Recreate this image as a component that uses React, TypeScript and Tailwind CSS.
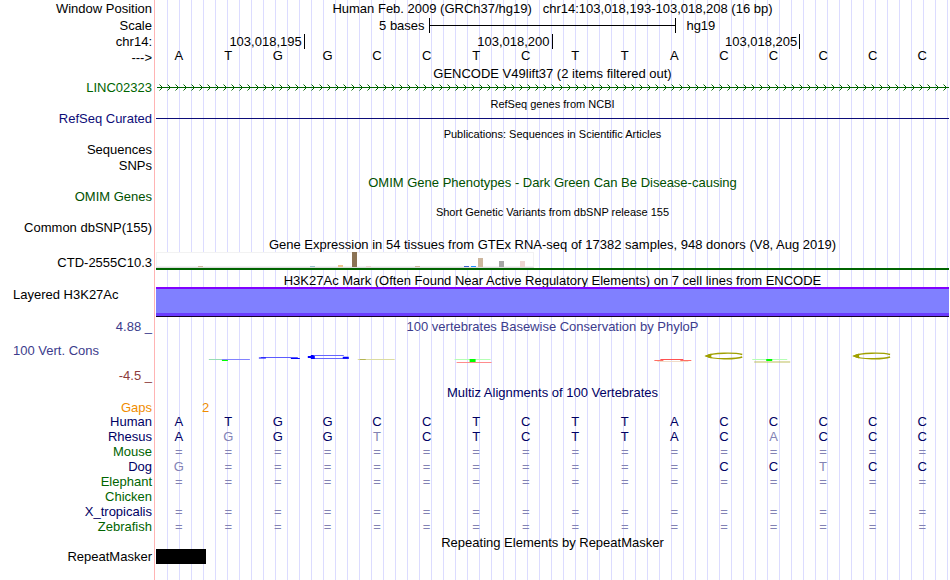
import type { ReactNode } from 'react'
import clsx from 'clsx'

const SEQUENCE = 'ATGGCCTCTTACCCCC'

const TISSUE_BARS = [
  { index: 6, height: 1, color: '#cdb79e' },
  { index: 22, height: 1, color: '#9ac0cd' },
  { index: 26, height: 2, color: '#eec591' },
  { index: 28, height: 15, color: '#8b7355' },
  { index: 30, height: 1, color: '#eed5d2' },
  { index: 37, height: 1, color: '#cdb79e' },
  { index: 44, height: 1, color: '#3a5fcd' },
  { index: 45, height: 1, color: '#1e90ff' },
  { index: 46, height: 9, color: '#cdb79e' },
  { index: 49, height: 6, color: '#a6a6a6' },
  { index: 52, height: 6, color: '#eed5d2' },
]

// '=' marks bases with no alignment, a space is an empty cell
const SPECIES = [
  { name: 'Human', color: 'text-[#000064]', bases: 'ATGGCCTCTTACCCCC' },
  { name: 'Rhesus', color: 'text-[#000064]', bases: 'AGGGTCTCTTACACCC' },
  { name: 'Mouse', color: 'text-[#006400]', bases: '================' },
  { name: 'Dog', color: 'text-[#000064]', bases: 'G==========CCTCC' },
  { name: 'Elephant', color: 'text-[#006400]', bases: '================' },
  { name: 'Chicken', color: 'text-[#006400]', bases: '                ' },
  { name: 'X_tropicalis', color: 'text-[#000064]', bases: '================' },
  { name: 'Zebrafish', color: 'text-[#006400]', bases: '================' },
]

interface RowProps {
  label?: ReactNode
  className?: string
  labelClass?: string
  trackClass?: string
  children?: ReactNode
}

function Row({ label, className = 'h-[15px]', labelClass = 'items-center justify-end', trackClass = '', children }: RowProps) {
  return (
    <div className={clsx('flex', className)}>
      <div className={clsx('mr-px flex w-[155px] shrink-0 border-r border-[#ffb4b4] pr-0.5', labelClass)}>{label}</div>
      <div
        className={clsx(
          'min-w-0 flex-1 bg-[repeating-linear-gradient(to_right,transparent_0px,transparent_11px,#dcdcff_11px,#dcdcff_12px)]',
          trackClass
        )}
      >
        {children}
      </div>
    </div>
  )
}

interface TitleRowProps {
  title: string
  label?: ReactNode
  className?: string
  titleClass?: string
}

function TitleRow({ title, label, className = 'h-4', titleClass = '' }: TitleRowProps) {
  return (
    <Row label={label} className={className} labelClass="items-center justify-end text-[#3c3c8c]" trackClass="flex items-center justify-center">
      <h2 className={titleClass}>{title}</h2>
    </Row>
  )
}

function Bases({ bases, reference, className = '' }: { bases: string; reference?: string; className?: string }) {
  return (
    <div className={clsx('grid h-full grid-cols-16 items-center text-center', className)}>
      {bases.split('').map((base, i) => (
        <span key={i} className={clsx('pr-1', reference && base !== reference[i] && 'text-[#8282b4]')}>
          {base}
        </span>
      ))}
    </div>
  )
}

function GeneArrows() {
  return (
    <svg className="block h-full w-full" aria-hidden="true">
      <defs>
        <pattern id="arrows" width="8" height="14" patternUnits="userSpaceOnUse">
          <path d="M3.5 3.5 6.5 6.5 3.5 9.5" fill="none" stroke="#006400" strokeWidth="1" />
        </pattern>
      </defs>
      <rect width="100%" height="14" fill="url(#arrows)" />
      <rect x="1" y="6" width="100%" height="1" fill="#006400" />
    </svg>
  )
}

function TissueChart() {
  return (
    <svg className="block" width="378" height="16" shapeRendering="crispEdges" role="img" aria-label="Expression by tissue">
      <rect width="378" height="16" fill="#f2f2f2" />
      <rect x="1" y="1" width="376" height="13" fill="#fff" />
      <rect y="15" width="378" height="1" fill="#dcdcdc" />
      {TISSUE_BARS.map((bar) => (
        <rect key={bar.index} x={bar.index * 7} y={15 - bar.height} width="5" height={bar.height} fill={bar.color} />
      ))}
    </svg>
  )
}

function ConservationLogo() {
  return (
    <svg className="block h-[50px] w-full" viewBox="0 0 794 50" preserveAspectRatio="none" fill="none" role="img" aria-label="Conservation logo">
      {/* T / G */}
      <path d="M53 24.5H94" stroke="#8282ff" />
      <path d="M53 24.5H66" stroke="#96dcb4" />
      <path d="M66 25.5H72" stroke="#00ff00" />
      {/* G */}
      <path d="M105 22.5H142" stroke="#5a5aff" />
      <path d="M103 23h7M135 23.5h9" stroke="#0000ff" />
      {/* G */}
      <path d="M158 20.5H188M158 23.5H193" stroke="#6464ff" />
      <path d="M152 22h7M187 22.8h6M155 21h3M155 23h4" stroke="#0000ff" strokeWidth="2" />
      {/* C */}
      <path d="M202 24.5H239" stroke="#dcdca0" />
      <path d="M204 24.5h6" stroke="#b4b450" />
      {/* T over A */}
      <path d="M299 24.5H335" stroke="#b4ffb4" />
      <path d="M301 27.5H336" stroke="#ff8c8c" />
      <rect x="314" y="24" width="6" height="3" fill="#00ff00" />
      {/* A */}
      <path d="M505 24.5H528" stroke="#ff5050" />
      <path d="M499 25.5H508M525 25.5H536" stroke="#ff6e64" />
      <path d="M502 26.5H533" stroke="#f0dcc8" />
      {/* C */}
      <path d="M587 19.5C580 17.5 557 17.5 551 21C557 24.5 580 24.5 587 22" stroke="#a0a000" strokeWidth="1.4" />
      <path d="M549 21 556 18.5V23.5Z" fill="#a0a000" />
      {/* T over C */}
      <path d="M597 24.5H632" stroke="#b4ffb4" />
      <path d="M599 27H635" stroke="#bebe5a" />
      <rect x="611" y="24" width="6" height="2" fill="#00ff00" />
      {/* C */}
      <path d="M735 19.5C728 17.5 705 17.5 699 21C705 24.5 728 24.5 735 22" stroke="#a0a000" strokeWidth="1.4" />
      <path d="M697 21 704 18.5V23.5Z" fill="#a0a000" />
    </svg>
  )
}

export default function App() {
  return (
    <main className="flex min-h-screen flex-col overflow-hidden bg-white pr-px font-['Liberation_Sans',Arial,sans-serif] text-[13px] leading-[15px] whitespace-pre text-black">
      <Row label="Window Position" className="h-[17px]" trackClass="flex items-center justify-center">
        <h1>Human Feb. 2009 (GRCh37/hg19)   chr14:103,018,193-103,018,208 (16 bp)</h1>
      </Row>
      <Row label="Scale" className="h-4" trackClass="grid grid-cols-32 items-center">
        <span className="col-span-11 pr-1 text-right">5 bases</span>
        <div className="col-span-10 flex h-[15px] items-center border-x border-black">
          <div className="h-px flex-1 bg-black" />
        </div>
        <span className="col-span-11 pl-2.5">hg19</span>
      </Row>
      <Row label="chr14:" className="h-[17px]" trackClass="grid grid-cols-16 items-center text-right">
        <span className="col-span-3 border-r border-black pr-0.5">103,018,195</span>
        <span className="col-span-5 border-r border-black pr-0.5">103,018,200</span>
        <span className="col-span-5 border-r border-black pr-0.5">103,018,205</span>
      </Row>
      <Row label="--->">
        <Bases bases={SEQUENCE} className="pb-1 leading-[11px]" />
      </Row>

      <TitleRow title="GENCODE V49lift37 (2 items filtered out)" />
      <Row label="LINC02323" className="h-[13px]" labelClass="items-center justify-end text-[#006400]">
        <GeneArrows />
      </Row>
      <TitleRow title="RefSeq genes from NCBI" className="h-[18px]" titleClass="pt-0.5 text-[11px]" />
      <Row label="RefSeq Curated" className="h-[13px]" labelClass="items-center justify-end text-[#0c0c78]" trackClass="flex items-center">
        <div className="h-px flex-1 bg-[#0c0c78]" />
      </Row>
      <TitleRow title="Publications: Sequences in Scientific Articles" className="h-[17px]" titleClass="pt-0.5 text-[11px]" />
      <Row label="Sequences" />
      <Row label="SNPs" className="h-[17px]" />
      <TitleRow title="OMIM Gene Phenotypes - Dark Green Can Be Disease-causing" titleClass="text-[#005000]" />
      <Row label="OMIM Genes" className="h-[13px]" labelClass="items-center justify-end text-[#005000]" />
      <TitleRow title="Short Genetic Variants from dbSNP release 155" className="h-[17px]" titleClass="pt-0.5 text-[11px]" />
      <Row label="Common dbSNP(155)" />
      <TitleRow
        title="Gene Expression in 54 tissues from GTEx RNA-seq of 17382 samples, 948 donors (V8, Aug 2019)"
        className="h-[17px]"
        titleClass="pt-0.5"
      />
      <Row label="CTD-2555C10.3" className="h-[18px]" labelClass="items-end justify-end">
        <TissueChart />
        <div className="h-0.5 bg-[#006400]" />
      </Row>

      <Row className="h-[17px]" trackClass="flex items-end justify-center">
        <h2 className="leading-[13px]">H3K27Ac Mark (Often Found Near Active Regulatory Elements) on 7 cell lines from ENCODE</h2>
      </Row>
      <Row label="Layered H3K27Ac" className="h-[30px]" labelClass="items-start pl-[13px]" trackClass="flex flex-col">
        <div className="h-0.5 bg-[#8000ff]" />
        <div className="flex-1 bg-[#8080ff]" />
        <div className="h-[3px] bg-[#6a3cff]" />
        <div className="h-px bg-[#140028]" />
      </Row>

      <TitleRow title="100 vertebrates Basewise Conservation by PhyloP" label="4.88 _" className="h-[18px]" titleClass="text-[#3c3c8c]" />
      <Row
        className="h-[50px]"
        labelClass="flex-col justify-between pt-2 pb-0.5 pl-[13px]"
        label={
          <>
            <span className="text-[#3c3c8c]">100 Vert. Cons</span>
            <span className="text-right text-[#8c3c3c]">-4.5 _</span>
          </>
        }
      >
        <ConservationLogo />
      </Row>

      <TitleRow title="Multiz Alignments of 100 Vertebrates" className="h-[15px]" titleClass="text-[#000064]" />
      {/* the gap count sits on the boundary between two bases */}
      <Row
        label="Gaps"
        className="h-[14px]"
        labelClass="items-center justify-end text-[#f08c00]"
        trackClass="grid grid-cols-8 items-center text-center text-[#f08c00]"
      >
        <span>2</span>
      </Row>
      {SPECIES.map((species) => (
        <Row key={species.name} label={species.name} labelClass={clsx('items-center justify-end', species.color)}>
          <Bases bases={species.bases} reference={SEQUENCE} className="text-[#000064]" />
        </Row>
      ))}

      <TitleRow title="Repeating Elements by RepeatMasker" className="h-[15px]" titleClass="pt-0.5" />
      <Row label="RepeatMasker" trackClass="grid grid-cols-16">
        <div className="bg-black" />
      </Row>
      <Row className="flex-1" />
    </main>
  )
}
